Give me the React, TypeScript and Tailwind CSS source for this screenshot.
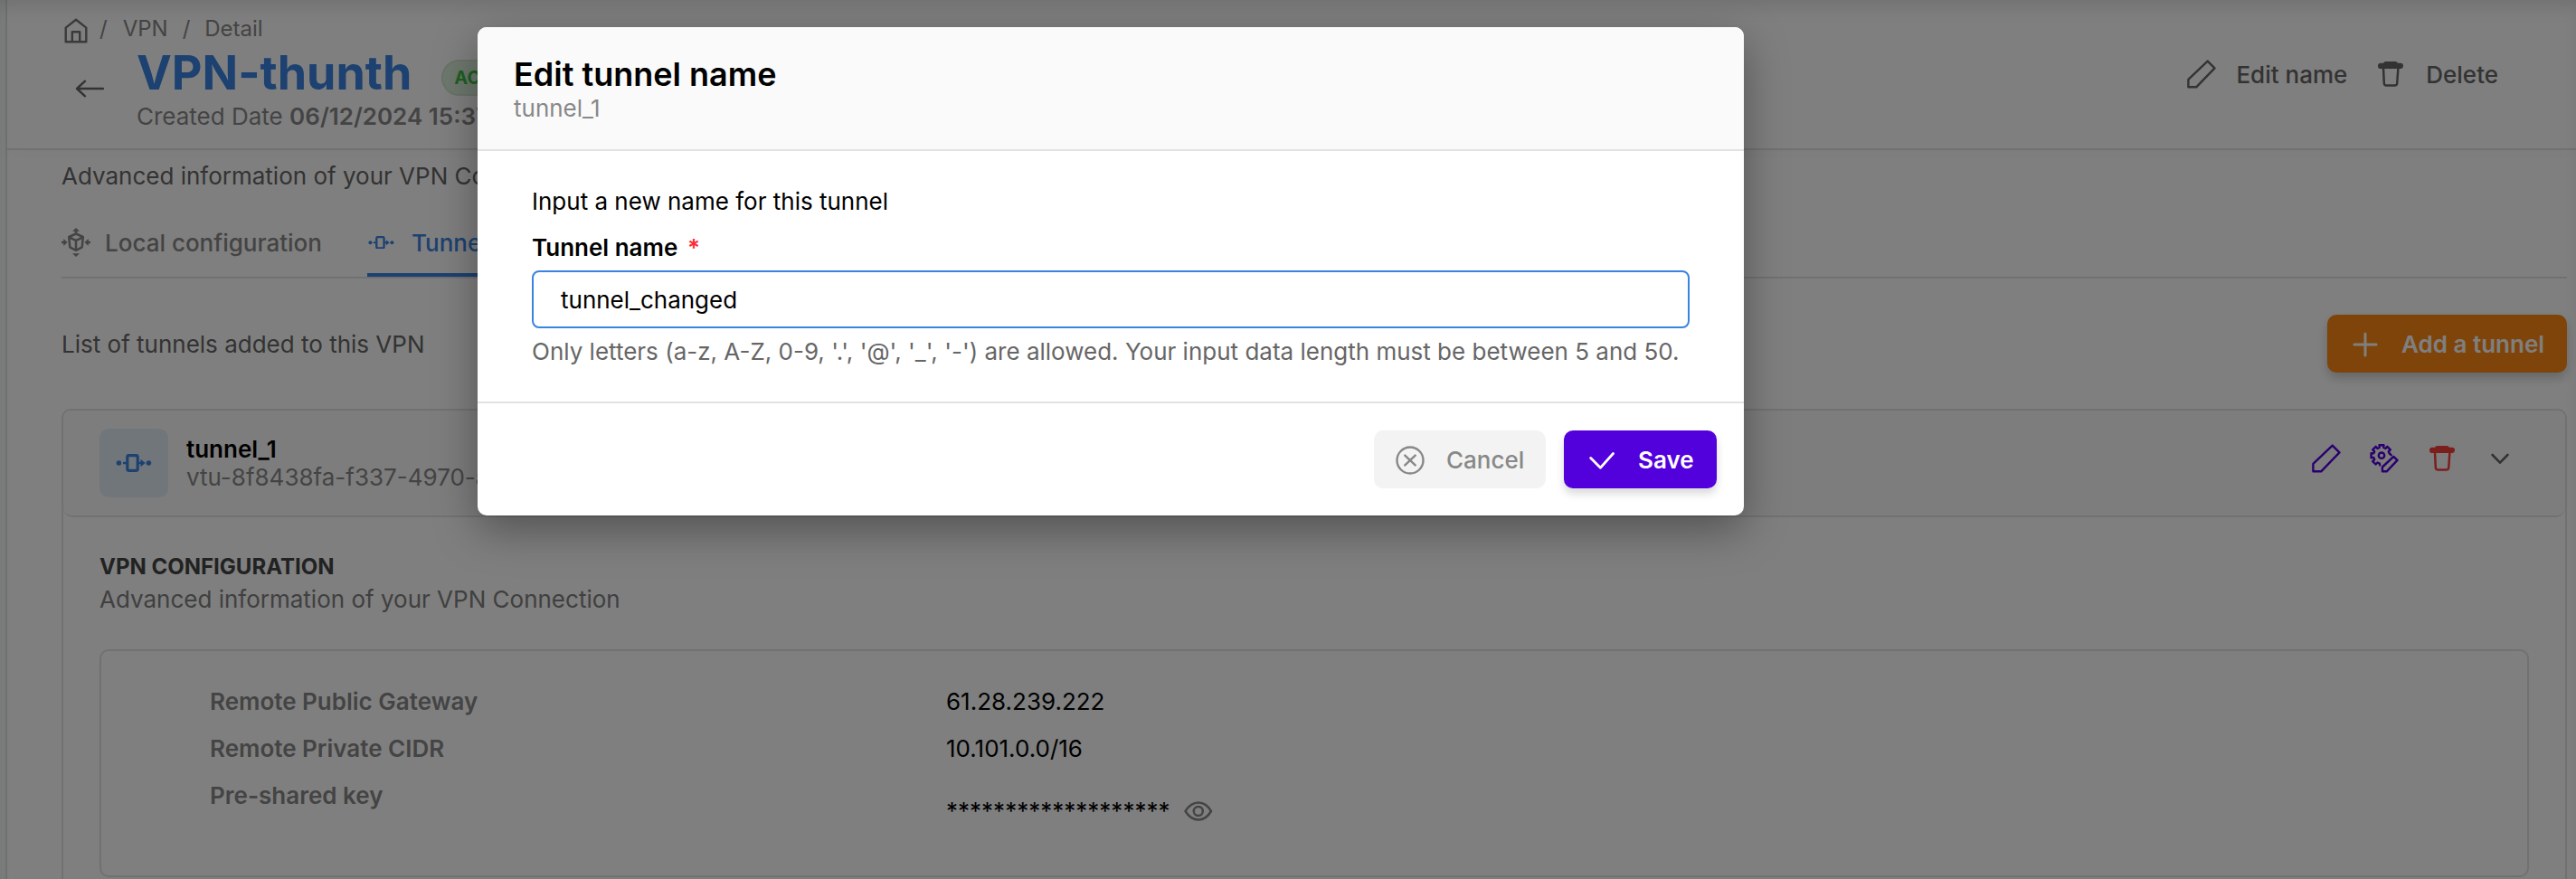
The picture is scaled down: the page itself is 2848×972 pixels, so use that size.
import React from "react";

type IconProps = { className?: string };

function HomeIcon({ className }: IconProps) {
  return (
    <svg className={className} width="26" height="28" viewBox="0 0 26 28" fill="none" stroke="currentColor" strokeWidth="2.4" strokeLinejoin="round">
      <path d="M1.7 10.6 13 1.8l11.3 8.8v15.6H1.7z" />
      <path d="M8.8 26V15.2h8.4V26" />
    </svg>
  );
}

function BackIcon({ className }: IconProps) {
  return (
    <svg className={className} width="32" height="20" viewBox="0 0 32 20" fill="none" stroke="currentColor" strokeWidth="2.4" strokeLinecap="round" strokeLinejoin="round">
      <path d="M31 10H2M11 1.7 2 10l9 8.3" />
    </svg>
  );
}

function PencilIcon({ className }: IconProps) {
  return (
    <svg className={className} width="32" height="32" viewBox="0 0 32 32" fill="none" stroke="currentColor" strokeWidth="2.4" strokeLinejoin="round">
      <path d="M22.7 1.6 30.5 9.3 10.2 30.3H1.4V21.9z" />
    </svg>
  );
}

function TrashIcon({ className }: IconProps) {
  return (
    <svg className={className} width="28" height="28" viewBox="0 0 28 28" fill="none">
      <path fill="currentColor" d="M8.5 0h11q1.600 0 2.500 1.800h3q3 0 3 3T25 8H3Q0 8 0 4.900t3-3.100h3Q6.900 0 8.500 0z" />
      <path stroke="currentColor" strokeWidth="2.5" d="M6 7l.8 17q.2 2.600 2.600 2.600h9.200q2.400 0 2.600-2.600L22.400 7" />
    </svg>
  );
}

function CubeIcon({ className }: IconProps) {
  return (
    <svg className={className} width="32" height="32" viewBox="0 0 32 32" fill="none" stroke="currentColor" strokeWidth="2.5" strokeLinejoin="round">
      <path d="M16 6.500 23.800 10 22.700 21.300 16 24.800 9.300 21.300 8.200 10z" />
      <path d="M8.400 10.500 16 13.800l7.600-3.300M16 13.800v10.500" />
      <path fill="currentColor" stroke="none" d="M16 0l4 3.800h-2.700v2h-2.600v-2H12zM16 32l4-3.800h-8zM6.500 16 2.300 12v2.800H0v2.400h2.300V20zM25.500 16l4.200-4v2.800H32v2.400h-2.300V20z" />
    </svg>
  );
}

function TunnelIcon({ className, width }: IconProps & { width: number }) {
  return (
    <svg className={className} width={width} height={width / 2} viewBox="0 0 40 20" fill="none">
      <g fill="currentColor">
        <circle cx="3.4" cy="10" r="2.8" />
        <circle cx="36.4" cy="10" r="2.8" />
        <path d="M27.500 5.700 32.700 10 27.500 14.300z" />
      </g>
      <rect x="12.800" y="1.600" width="11.400" height="16.800" rx="1.800" stroke="currentColor" strokeWidth="3.2" />
      <path d="M8 10h4M25 10h4" stroke="currentColor" strokeWidth="2.600" />
    </svg>
  );
}

function gearPath(cx: number, cy: number, inner: number, outer: number) {
  const at = (deg: number, r: number) => {
    const a = (deg * Math.PI) / 180;
    return `${(cx + r * Math.cos(a)).toFixed(2)} ${(cy + r * Math.sin(a)).toFixed(2)}`;
  };
  const points: string[] = [at(-3, outer - 1), at(-14, inner)];
  for (const deg of [-45, -90, -135, -180, -225]) {
    points.push(at(deg + 15, inner), at(deg + 12, outer), at(deg - 12, outer), at(deg - 15, inner));
  }
  points.push(at(-255, inner), at(-260, outer - 1));
  return "M" + points.join("L");
}

function GearEditIcon({ className }: IconProps) {
  return (
    <svg className={className} width="32" height="32" viewBox="0 0 32 32" fill="none" stroke="currentColor" strokeWidth="2.4" strokeLinejoin="round" strokeLinecap="round">
      <path d={gearPath(13, 12.7, 9, 11.7)} />
      <circle cx="13" cy="12.7" r="3.2" />
      <path d="M26.300 13.900 30.500 17.900 18.700 30.300H13.900V25.500z" />
    </svg>
  );
}

function ChevronIcon({ className }: IconProps) {
  return (
    <svg className={className} width="20" height="13" viewBox="0 0 20 13" fill="none" stroke="currentColor" strokeWidth="2.6" strokeLinecap="round" strokeLinejoin="round">
      <path d="M1.600 2 10 10.700 18.400 2" />
    </svg>
  );
}

function PlusIcon({ className }: IconProps) {
  return (
    <svg className={className} width="28" height="28" viewBox="0 0 28 28" fill="none" stroke="currentColor" strokeWidth="3" strokeLinecap="round">
      <path d="M14 1.900v24.200M1.900 14h24.200" />
    </svg>
  );
}

function EyeIcon({ className }: IconProps) {
  return (
    <svg className={className} width="32" height="22" viewBox="0 0 32 22" fill="none" stroke="currentColor" strokeWidth="2.5" strokeLinejoin="round">
      <path d="M1.500 11Q7.500 1.500 16 1.500T30 11Q24.500 20.500 16 20.500T1.500 11z" />
      <circle cx="15.800" cy="11" r="5" />
    </svg>
  );
}

function CancelIcon({ className }: IconProps) {
  return (
    <svg className={className} width="32" height="32" viewBox="0 0 32 32" fill="none" stroke="currentColor" strokeWidth="2.4" strokeLinecap="round">
      <circle cx="16" cy="16" r="14.5" />
      <path d="M10.300 10.600l11.400 10.800M21.700 10.600 10.300 21.400" />
    </svg>
  );
}

function CheckIcon({ className }: IconProps) {
  return (
    <svg className={className} width="28" height="20" viewBox="0 0 28 20" fill="none" stroke="currentColor" strokeWidth="2.8" strokeLinecap="round" strokeLinejoin="round">
      <path d="M1.700 7.500 12.400 18.300 26.500 2.500" />
    </svg>
  );
}

const details = [
  { label: "Remote Public Gateway", value: "61.28.239.222" },
  { label: "Remote Private CIDR", value: "10.101.0.0/16" },
];

function PageHeader() {
  return (
    <header className="flex h-[166px] justify-between border-b-2 border-[#e2e2e2] pl-[63px] pr-[86px] shadow-[0_2px_20px_rgba(0,0,0,0.03)]">
      <div>
        <nav className="mt-[16px] flex h-8 items-center text-[24px] leading-8 text-[#888]">
          <HomeIcon className="mt-1 text-[#757575]" />
          <span className="ml-[13px]">/</span>
          <span className="ml-[17px]">VPN</span>
          <span className="ml-[16px]">/</span>
          <span className="ml-[16px]">Detail</span>
        </nav>
        <div className="flex">
          <BackIcon className="ml-[12px] mt-[40px] text-[#666]" />
          <div className="ml-[36px]">
            <div className="flex h-[62px] items-start">
              <h1 className="mt-[2px] text-[52px] font-bold leading-[62px] text-[#3a83e0]">VPN-thunth</h1>
              <span className="ml-[33px] mt-[18px] flex h-10 items-center rounded-full border-2 border-[#d0e9d0] bg-[#ddf0dd] px-3 text-[20px] font-bold text-[#3fbf45]">
                ACTIVE
              </span>
            </div>
            <p className="mt-[3px] text-[26px] leading-8 text-[#888]">
              Created Date <b className="font-semibold">06/12/2024 15:37</b>
            </p>
          </div>
        </div>
      </div>
      <div className="mt-[66px] flex h-8 items-center text-[26px] font-medium leading-8 text-[#666]">
        <PencilIcon />
        <span className="ml-[22px] pt-[2px]">Edit name</span>
        <TrashIcon className="ml-[34px]" />
        <span className="ml-[25px] pt-[2px]">Delete</span>
      </div>
    </header>
  );
}

function Tabs() {
  return (
    <div className="mt-[29px] flex h-[68px] border-b-2 border-[#e2e2e2] text-[26px] font-medium leading-8">
      <div className="flex h-[56px] items-center text-[#888]">
        <CubeIcon />
        <span className="ml-[16px] pt-[2px]">Local configuration</span>
      </div>
      <div className="ml-[50px] flex h-[66px] items-center border-b-4 border-[#3a83e0] pb-[6px] pr-4 text-[#3a83e0]">
        <TunnelIcon width={29} className="ml-[1.5px]" />
        <span className="ml-[18.500px] pt-[2px]">Tunnels</span>
      </div>
    </div>
  );
}

function TunnelCard() {
  return (
    <section className="mt-[40px] h-[540px] rounded-t-[10px] border-2 border-[#e2e2e2]">
      <div className="flex h-[118px] items-center rounded-[10px] border-b-2 border-[#e2e2e2] bg-[#fbfbfb] pl-[40px] pr-[62px]">
        <div className="mb-[1px] flex size-[76px] items-center justify-center rounded-[10px] bg-[#e2edf6] text-[#3a83e0]">
          <TunnelIcon width={40} />
        </div>
        <div className="ml-[20px] text-[26px] leading-[31px]">
          <div className="font-semibold text-black">tunnel_1</div>
          <div className="text-[#888]">vtu-8f8438fa-f337-4970-a</div>
        </div>
        <div className="mb-[10px] ml-auto flex items-center">
          <PencilIcon className="text-[#5200dc]" />
          <GearEditIcon className="ml-[32px] text-[#5200dc]" />
          <TrashIcon className="ml-[34px] text-[#f43f38]" />
          <ChevronIcon className="ml-[40px] text-[#666]" />
        </div>
      </div>
      <div className="px-[40px] pt-[39px]">
        <h2 className="text-[24px] font-bold leading-8 text-[#444]">VPN CONFIGURATION</h2>
        <p className="mt-[4px] text-[26px] leading-8 text-[#808080]">Advanced information of your VPN Connection</p>
        <div className="mt-[39px] h-[252px] rounded-[10px] border-2 border-[#e2e2e2] px-[120px] pt-[40px] text-[26px] leading-8 shadow-[0_0_20px_rgba(0,0,0,0.02)]">
          {details.map((row) => (
            <div key={row.label} className="flex h-[52px]">
              <span className="w-[814px] font-semibold text-[#888]">{row.label}</span>
              <span className="text-black">{row.value}</span>
            </div>
          ))}
          <div className="flex">
            <span className="w-[814px] font-semibold text-[#888]">Pre-shared key</span>
            <span className="mt-[17px] flex items-center text-black">
              *******************
              <EyeIcon className="ml-[16px] text-[#888]" />
            </span>
          </div>
        </div>
      </div>
    </section>
  );
}

function EditDialog() {
  return (
    <div role="dialog" className="absolute left-[528px] top-[30px] flex h-[540px] w-[1400px] flex-col rounded-[10px] bg-white shadow-[0_16px_48px_rgba(0,0,0,0.35)]">
      <div className="h-[137px] rounded-t-[10px] border-b-2 border-[#e2e2e2] bg-[#fafafa] pl-[40px] pt-[30px]">
        <h2 className="text-[36px] font-semibold leading-[44px] text-black">Edit tunnel name</h2>
        <p className="text-[26px] leading-8 text-[#888]">tunnel_1</p>
      </div>
      <div className="h-[279px] border-b-2 border-[#e2e2e2] px-[60px] pt-[40px] text-[26px] leading-8">
        <p className="text-black">Input a new name for this tunnel</p>
        <p className="mt-[19px] font-semibold text-black">
          Tunnel name <span className="ml-1 text-[#fb2c36]">*</span>
        </p>
        <div className="mt-[9px] flex h-16 items-center rounded-[8px] border-2 border-[#3a83e0] pl-[30px] pt-[2px] text-black">tunnel_changed</div>
        <p className="mt-[10px] whitespace-nowrap text-[#666]">
          Only letters (a-z, A-Z, 0-9, '.', '@', '_', '-') are allowed. Your input data length must be between 5 and 50.
        </p>
      </div>
      <div className="flex justify-end gap-[20px] pr-[30px] pt-[30px] text-[26px] leading-8">
        <button className="flex h-16 w-[190px] items-center rounded-[10px] bg-[#f3f3f3] pl-[24px] pt-[2px] font-medium text-[#888]">
          <CancelIcon />
          <span className="ml-[24px]">Cancel</span>
        </button>
        <button className="flex h-16 w-[169px] items-center rounded-[10px] bg-[#5200dc] pl-[28px] pt-[2px] font-semibold text-white shadow-[0_6px_10px_rgba(0,0,0,0.15)]">
          <CheckIcon />
          <span className="ml-[26px]">Save</span>
        </button>
      </div>
    </div>
  );
}

export default function App() {
  return (
    <div className="relative flex h-[972px] w-full overflow-hidden bg-white font-['Inter',sans-serif]">
      <div className="w-[8px] shrink-0 border-r-2 border-[#e2e2e2] bg-[#f8fcfb]" />
      <main className="min-w-0 flex-1">
        <PageHeader />
        <div className="pl-[60px] pr-[10px] pt-[13px]">
          <p className="text-[26px] leading-8 text-[#666]">Advanced information of your VPN Connection</p>
          <Tabs />
          <div className="mt-[40px] flex h-16 items-center justify-between">
            <p className="pt-[2px] text-[26px] leading-8 text-[#666]">List of tunnels added to this VPN</p>
            <button className="flex h-16 w-[265px] items-center rounded-[10px] bg-[#ff8812] pl-[28px] pt-[2px] text-[26px] font-semibold leading-8 text-white shadow-[0_6px_12px_rgba(0,0,0,0.2)]">
              <PlusIcon />
              <span className="ml-[26px] whitespace-nowrap">Add a tunnel</span>
            </button>
          </div>
          <TunnelCard />
        </div>
      </main>
      <div className="absolute inset-0 bg-black/50 shadow-[inset_0_14px_20px_-8px_rgba(0,0,0,0.12)]" />
      <EditDialog />
    </div>
  );
}
